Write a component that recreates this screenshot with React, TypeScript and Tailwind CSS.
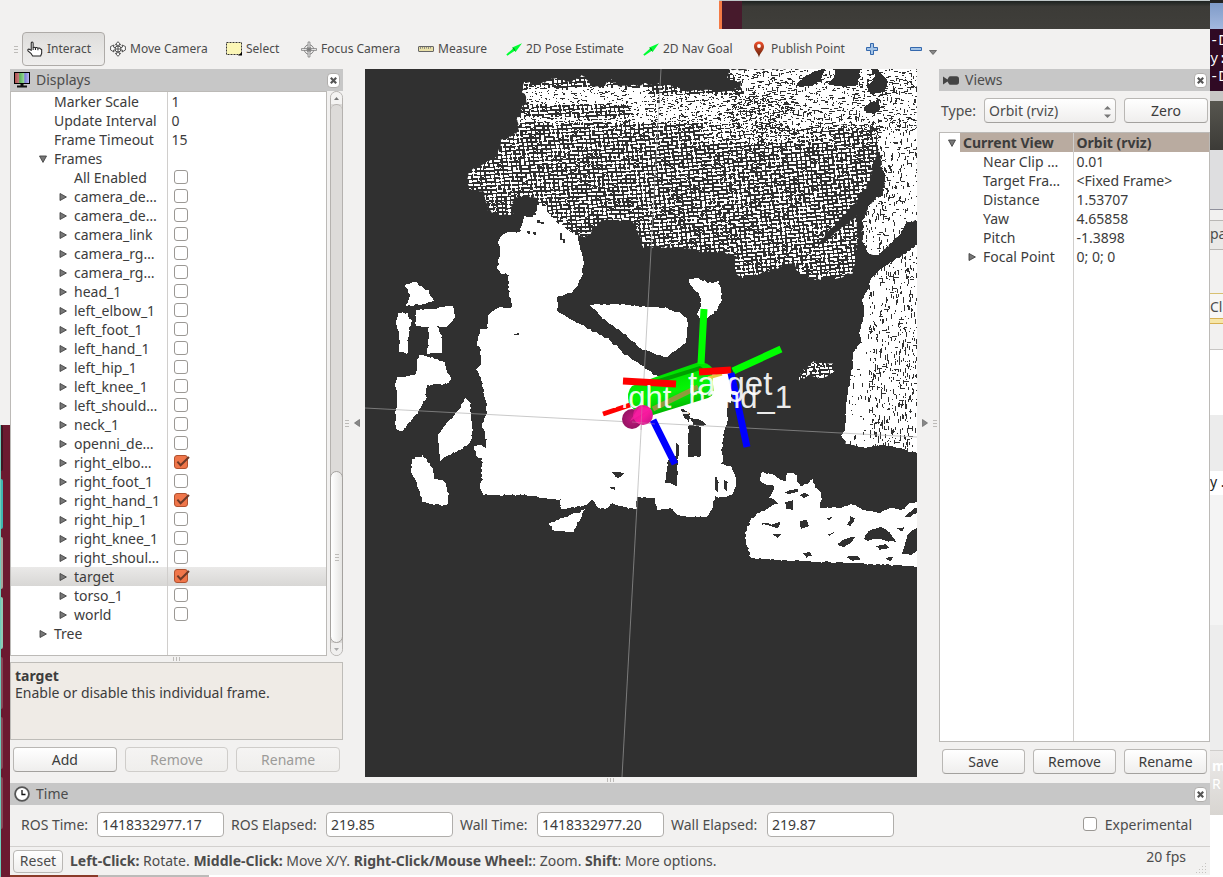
import React, { useState } from "react";

/* ---------- geometry helpers for the 3D view ---------- */

type Pt = [number, number];

function rng(seed: number) {
  let s = seed;
  return () => {
    s = (s * 1664525 + 1013904223) % 4294967296;
    return s / 4294967296;
  };
}

function parse(text: string): Pt[] {
  return text
    .trim()
    .split(/\s+/)
    .map((p) => p.split(",").map(Number) as Pt);
}

/* Outline with the irregular border of a depth-camera cloud. */
function ragged(text: string, seed: number, amount = 0.9) {
  const r = rng(seed);
  const pts = parse(text);
  let d = "";
  pts.forEach((a, i) => {
    const b = pts[(i + 1) % pts.length];
    const n = Math.max(1, Math.round(Math.hypot(b[0] - a[0], b[1] - a[1]) / 2.5));
    for (let k = 0; k < n; k++) {
      const x = a[0] + ((b[0] - a[0]) * k) / n + (r() - 0.5) * 2 * amount;
      const y = a[1] + ((b[1] - a[1]) * k) / n + (r() - 0.5) * 2 * amount;
      d += `${d === "" ? "M" : "L"}${x.toFixed(1)} ${y.toFixed(1)}`;
    }
  });
  return d + "Z";
}

function rect(x: number, y: number, w: number, h: number) {
  return `M${Math.round(x)} ${Math.round(y)}h${w}v${h}h${-w}z`;
}

function mesh(x0: number, y0: number, x1: number, y1: number, seed: number) {
  const r = rng(seed);
  let d = "";
  for (let v = y0; v < y1 + 30; v += 3.8) {
    for (let u = x0; u < x1; u += 4.5) {
      const y = v - Math.max(0, u - 640) * 0.09 + Math.max(0, 640 - u) * 0.05;
      const x = u + (v - 160) * 0.1;
      const t = r();
      if (t < 0.12) d += rect(x, y, 2, 1) + rect(x + 2, y + 1, 1, 1);
      else if (t < 0.27) d += rect(x, y, 2, 2);
      else if (t < 0.5) d += rect(x, y, 4, 2);
      else if (t < 0.68) d += rect(x, y, 3, 3);
      else d += rect(x, y, 3, 2);
      if (r() < 0.24) d += rect(x + 3, y + 1, 2, 1);
      if (r() < 0.26) d += rect(x + 1, y + 2, 1, 2);
    }
  }
  return d;
}

function specks(x0: number, y0: number, x1: number, y1: number, count: number, seed: number, vertical: number, long = 4) {
  const r = rng(seed);
  let d = "";
  for (let i = 0; i < count; i++) {
    const x = x0 + r() * (x1 - x0);
    const y = y0 + r() * (y1 - y0);
    const len = 1 + Math.floor(r() * long);
    d += r() < vertical ? rect(x, y, 1, len) : rect(x, y, len, 1);
  }
  return d;
}

const curtain = ragged(
  "525,80 533,84 545,82 553,78 570,82 584,75 590,84 600,87 612,80 620,87 645,84 660,84 690,91 730,91 742,88 742,82 728,79 730,69 917,69 917,220 907,222 900,234 877,256 867,252 863,239 863,219 870,205 877,197 883,197 886,176 882,166 879,152 877,150 873,166 870,182 860,197 847,212 827,232 817,246 823,244 840,229 857,217 858,236 855,256 852,272 843,277 810,280 800,272 793,262 767,272 743,277 735,274 736,256 720,252 697,251 673,247 643,247 638,232 632,222 605,219 595,226 588,237 578,236 558,229 538,204 537,197 518,196 513,202 512,215 502,216 488,209 485,196 482,192 468,189 467,172 480,166 497,156 502,141 518,132 517,119 523,107 528,102 523,92",
  7,
  1.6
);
const wallTop = ragged(
  "786,69 917,69 917,220 907,222 900,234 877,256 867,252 863,239 863,219 870,205 877,197 883,197 886,176 882,166 879,152 877,136 868,126 830,124 806,120 786,100",
  11
);
const wallLow = ragged(
  "920,243 900,257 880,269 870,281 867,292 862,299 863,303 864,320 860,330 861,343 853,352 852,370 847,397 845,430 842,435 845,444 867,448 873,445 897,447 910,452 920,452",
  13
);

const solids = [
  "525,216 520,232 508,232 503,234 498,241 500,252 497,269 500,273 509,275 508,282 510,299 512,307 498,308 488,315 488,328 480,330 477,342 480,350 480,365 477,369 482,383 485,397 487,413 482,423 486,440 485,448 478,444 473,447 477,457 482,458 482,480 479,485 483,495 525,495 548,499 560,500 561,509 568,509 588,504 593,499 598,508 608,508 612,503 627,508 636,508 637,497 655,498 657,510 673,509 678,516 690,517 707,517 713,507 715,497 723,497 733,495 737,480 732,468 722,463 722,450 725,427 728,420 727,403 730,372 700,367 657,377 640,364 623,353 610,340 595,332 558,312 557,297 573,292 582,276 584,262 581,251 578,236 567,229 557,222 548,212 547,206 538,205 536,212 532,218",
  "590,305 622,304 643,307 667,308 680,313 688,320 686,343 667,357 643,350 623,333 603,318",
  "689,279 698,278 710,283 718,281 721,287 721,302 715,312 708,318 702,320 697,315 701,305 700,295 690,285",
  "405,285 415,282 428,290 433,300 420,305 406,305 410,295",
  "416,310 453,306 455,317 447,327 416,326",
  "398,313 407,313 411,320 408,338 408,354 399,352 400,337 396,323",
  "428,326 437,326 442,335 442,353 427,354 429,340",
  "420,354 445,362 448,373 452,380 447,384 427,385 426,397 417,413 402,432 396,430 395,417 397,403 396,377 416,375 417,360",
  "465,398 470,403 472,427 471,443 440,461 438,435 447,423 457,412",
  "412,460 423,455 433,470 434,479 443,480 449,493 447,506 424,503 418,487 411,470",
  "549,523 565,517 584,510 577,525 574,532 554,531",
  "745,533 752,518 760,513 778,503 770,497 775,487 760,482 761,472 773,475 785,482 788,473 797,475 797,482 803,487 813,478 815,487 822,492 820,507 840,508 853,504 863,510 880,513 890,508 903,509 910,503 920,502 920,567 893,565 855,563 797,561 750,558 747,543",
];

const holes = [
  "797,84 805,76 822,69 825,69 820,82 810,86 800,87",
  "828,84 834,76 835,69 860,69 858,85 845,87",
  "868,88 875,77 871,69 878,69 888,82 885,92 870,94",
  "864,108 870,102 878,101 880,109 874,114 866,113",
  "689,425 701,427 701,456 688,457",
  "677,442 675,457 668,460 665,483 672,483 677,487 678,457 680,447",
  "681,408 690,413 689,422 684,418",
  "690,418 700,420 708,424 703,427 694,425",
  "715,477 718,478 718,493 715,490",
  "724,480 727,482 727,491 724,489",
  "612,472 625,473 618,478",
  "610,487 616,487 615,489 611,489",
  "785,492 798,488 798,492 787,494",
  "800,495 805,492 809,495 804,498",
  "785,502 793,500 792,510 786,508",
  "800,521 807,520 809,526 801,529",
  "762,522 772,524 780,522 778,528 771,526 762,524",
  "773,534 782,534 777,538",
  "826,518 832,517 829,521",
  "850,516 855,518 851,526 848,525",
  "838,544 848,538 855,537 851,543 842,547",
  "828,534 834,532 830,537",
  "803,553 810,552 812,556 806,557",
  "864,539 868,531 880,527 890,532 896,542 888,541 878,538 868,541",
  "876,546 885,544 889,548 880,550",
  "903,517 912,510 920,506 920,512 908,517",
  "909,533 920,525 920,550 910,555 902,553",
  "847,557 857,556 861,560 850,560",
  "886,558 893,557 891,561",
  "897,529 905,527 903,531",
];

const cloudPaths = {
  mesh: mesh(445, 50, 915, 290, 3),
  fill:
    specks(520, 87, 645, 104, 1100, 21, 0.05, 5) +
    specks(515, 117, 650, 122, 230, 23, 0.05, 5) +
    specks(630, 94, 800, 122, 1700, 22, 0.08, 5) +
    specks(700, 120, 830, 142, 450, 24, 0.1, 5) +
    specks(780, 110, 880, 128, 900, 25, 0.1, 5),
  upper: specks(728, 69, 917, 130, 1050, 31, 0.3, 4),
  arc: specks(808, 124, 878, 140, 260, 33, 0.2, 5),
  wall: specks(862, 120, 917, 256, 400, 35, 0.7, 4),
  low: specks(868, 250, 917, 445, 500, 37, 0.85, 5) + specks(845, 350, 917, 450, 120, 39, 0.85, 4),
  blob: mesh(780, 355, 840, 400, 41) + specks(797, 362, 833, 381, 60, 43, 0.4, 3),
};

function PointCloudView() {
  return (
    <svg
      viewBox="365 69 552 708"
      preserveAspectRatio="xMidYMin slice"
      className="block h-full w-full bg-[#303030]"
      role="img"
      aria-label="3D view"
    >
      <defs>
        <clipPath id="curtain"><path d={curtain} /></clipPath>
        <clipPath id="wallTop"><path d={wallTop} /></clipPath>
        <clipPath id="wallLow"><path d={wallLow} /></clipPath>
        <clipPath id="blob">
          <path d={ragged("797,378 803,371 813,362 822,363 832,364 834,373 822,379 810,375 798,381", 5)} />
        </clipPath>
        <linearGradient id="cyl" x1="0" y1="0" x2="0.35" y2="1">
          <stop offset="0" stopColor="#00b400" />
          <stop offset="0.3" stopColor="#00e000" />
          <stop offset="0.65" stopColor="#05f505" />
          <stop offset="1" stopColor="#00b000" />
        </linearGradient>
        <radialGradient id="ballBack"><stop offset="0" stopColor="#c0187e" /><stop offset="1" stopColor="#961464" /></radialGradient>
        <linearGradient id="ballFront" x1="0" y1="0" x2="1" y2="1">
          <stop offset="0" stopColor="#d0158a" /><stop offset="0.55" stopColor="#f81a9e" /><stop offset="1" stopColor="#c01482" />
        </linearGradient>
      </defs>

      <g shapeRendering="crispEdges">
        <g clipPath="url(#curtain)" fill="#fff">
          <path d={cloudPaths.mesh} />
          <path d={cloudPaths.fill} />
          <path d="M730 69h60v26h-45z" />
        </g>
        <path d={wallTop} fill="#fff" />
        <path d={wallLow} fill="#fff" />
        <g clipPath="url(#blob)"><path d={cloudPaths.blob} fill="#fff" /></g>
        {solids.map((s, i) => (
          <path key={i} d={ragged(s, 100 + i)} fill="#fff" />
        ))}
        <g fill="#303030">
          <g clipPath="url(#curtain)"><path d={cloudPaths.upper} /></g>
          <g clipPath="url(#wallTop)"><path d={cloudPaths.arc} /><path d={cloudPaths.wall} /></g>
          <g clipPath="url(#wallLow)"><path d={cloudPaths.low} /></g>
          {holes.map((s, i) => (
            <path key={i} d={ragged(s, 200 + i, 0.7)} />
          ))}
          <path d="M537 220h3v2h4v2h-3v-1h-4zM527 231h3v3h-2zM533 232h3v3h-2zM560 233h2v6h3v4h-2v-3h-3zM514 335h5v-2h-2v1h-3z" />
        </g>
      </g>

      <path d="M365 408L917 437M661 69L622 777" stroke="#a8a8a8" strokeOpacity="0.62" fill="none" />

      <path d="M632 386L653 378L699 362Q708 362 713 369L716 386Q715 395 708 398L653 415Q640 418 629 404Q626 392 632 386Z" fill="url(#cyl)" />
      <path d="M655 380L700 366L704 369L662 382Z" fill="#00a000" />
      <path d="M712 372H731V403Q720 400 714 396Z" fill="#fff" />
      <path d="M708 378L722 374" stroke="#e6c840" strokeWidth="3" />
      <path d="M653 409L698 387" stroke="#8f9a3c" strokeWidth="5" />
      <g strokeWidth="7" fill="none">
        <path d="M704 309L701 364M781 349L733 371" stroke="#0f0" />
        <path d="M623 381L676 384M699 372L731 370" stroke="#f00" />
        <path d="M603 414L630 405" stroke="#f00" strokeWidth="5" />
        <path d="M731 373L747 447M653 420L675 464" stroke="#00f" />
      </g>
      <g fill="#fff" fillOpacity="0.92" fontFamily="'Liberation Sans', Arial, sans-serif">
        <text x="611" y="408" fontSize="31">right_hand_1</text>
        <text x="688" y="395" fontSize="33">target</text>
      </g>
      <circle cx="632" cy="419" r="10" fill="url(#ballBack)" />
      <circle cx="643" cy="415" r="10" fill="url(#ballFront)" />
      <path d="M630 421L640 406L651 409Z" fill="#fb20a4" fillOpacity="0.7" />
      <path d="M632 422L655 424M642 405L641 430" stroke="#d080a8" strokeOpacity="0.5" />
    </svg>
  );
}

/* ---------- icons ---------- */

const HandIcon = () => (
  <svg width="17" height="16" viewBox="0 0 17 16" fill="#fff" stroke="#222" strokeWidth="1.1" strokeLinejoin="round">
    <path d="M4.5 9.5V2Q4.5 .6 5.5 .6T6.5 2V6.5Q7.8 5.6 9 6.7Q10.5 5.8 11.6 7.2Q13.4 6.4 14.4 8L15.6 8.6V12.5L14.5 15.4H6L4.5 13L1 10Q.5 8 2 8Z" />
    <path d="M6.5 6.5V9M9 6.7V9M11.6 7.2V9.4" fill="none" />
  </svg>
);
const MoveIcon = () => (
  <svg width="16" height="16" viewBox="0 0 16 16" fill="#fff" stroke="#444" strokeWidth=".9">
    <path d="M8 .7L10.6 3.6H9V5H7V3.6H5.4ZM8 15.3L10.6 12.4H9V11H7V12.4H5.4ZM.6 5.5L4 4L3.4 6L5.5 7V9L3.4 9.2L4 11L.6 9ZM15.4 5.5L12 4L12.6 6L10.5 7V9L12.6 9.2L12 11L15.4 9Z" />
    <circle cx="8" cy="8" r="3" /><path d="M5 8H11M8 5V11" />
  </svg>
);
const SelectIcon = () => (
  <svg width="16" height="14" viewBox="0 0 16 14">
    <rect x=".5" y=".5" width="15" height="12" fill="#fbf6b6" stroke="#333" strokeDasharray="2 1" />
    <path d="M16 10V13.5H12Z" fill="#000" />
  </svg>
);
const FocusIcon = () => (
  <svg width="17" height="17" viewBox="0 0 17 17" fill="none" stroke="#777">
    <circle cx="8.5" cy="8.5" r="5" /><circle cx="8.5" cy="8.5" r="2.5" />
    <path d="M7.5 .5H9.5V16.5H7.5ZM.5 7.5V9.5H16.5V7.5Z" strokeWidth=".8" fill="#eee" />
    <path d="M8.5 6V11M6 8.5H11" />
  </svg>
);
const RulerIcon = () => (
  <svg width="16" height="6" viewBox="0 0 16 6">
    <rect x=".5" y=".5" width="15" height="5" rx=".5" fill="#e9e0a8" stroke="#666" />
    <path d="M2.5 1V3M4.5 1V2.5M6.5 1V3M8.5 1V2.5M10.5 1V3M12.5 1V2.5" stroke="#777" strokeWidth=".8" />
  </svg>
);
const ArrowIcon = () => (
  <svg width="16" height="13" viewBox="0 0 16 13">
    <path d="M.3 11.4L7 5.4L6.2 4.4L16 .3L9.6 9L8.8 7.8L1.4 12.7Z" fill="#0f3" />
    <path d="M6.2 4.4L9.6 9L8.4 5.6Z" fill="#0a7a1c" />
  </svg>
);
const PinIcon = () => (
  <svg width="16" height="17" viewBox="0 0 16 17">
    <defs><linearGradient id="pin" x1="0" y1="0" x2="0" y2="1"><stop offset="0" stopColor="#f0502c" /><stop offset="1" stopColor="#5a2008" /></linearGradient></defs>
    <path d="M8 16.5C7.4 12 3 9.6 3 5.4C3 2.6 5.2 .6 8 .6S13 2.6 13 5.4C13 9.6 8.6 12 8 16.5Z" fill="url(#pin)" />
    <circle cx="8" cy="5" r="1.9" fill="#fff" />
  </svg>
);
const PlusIcon = () => (
  <svg width="12" height="12" viewBox="0 0 12 12"><path d="M4.5 .5H7.5V4.5H11.5V7.5H7.5V11.5H4.5V7.5H.5V4.5H4.5Z" fill="#a3c3e6" stroke="#3468ad" /></svg>
);
const MinusIcon = () => (
  <svg width="12" height="4" viewBox="0 0 12 4"><path d="M.5 .5H11.5V3.5H.5Z" fill="#a3c3e6" stroke="#3468ad" /></svg>
);
const ScreenIcon = () => (
  <svg width="16" height="16" viewBox="0 0 16 16">
    <defs><linearGradient id="scr" x1="0" x2="1"><stop offset="0" stopColor="#b04848" /><stop offset=".3" stopColor="#c08080" /><stop offset=".34" stopColor="#58b058" /><stop offset=".64" stopColor="#98d898" /><stop offset=".68" stopColor="#7878d8" /><stop offset="1" stopColor="#c0c0f0" /></linearGradient></defs>
    <rect x=".5" y=".5" width="15" height="11" fill="url(#scr)" stroke="#000" />
    <path d="M6.5 12H9.5V13.5H13V15.5H3V13.5H6.5Z" fill="#111" />
  </svg>
);
const CameraIcon = () => (
  <svg width="16" height="9" viewBox="0 0 16 9" fill="#444"><path d="M0 .5L4.5 3.5L5.5 1.5Q6 .3 7.5 .3H13.5Q16 .3 16 3V6Q16 8.7 13.5 8.7H7.5Q6 8.7 5.5 7.2L4.5 5.5L0 8.5Z" /></svg>
);
const ClockIcon = () => (
  <svg width="16" height="16" viewBox="0 0 16 16" fill="none"><circle cx="8" cy="8" r="6.9" fill="#fff" stroke="#555" strokeWidth="1.8" /><path d="M8 4V8.5H11.5" stroke="#111" strokeWidth="1.3" /></svg>
);

function Expander({ open }: { open?: boolean }) {
  return (
    <svg width="8" height="8" viewBox="0 0 8 8" className="shrink-0" fill="#777" stroke="#444" strokeWidth=".9">
      <path d={open ? "M.5 1H7.5L4 7.4Z" : "M1 .5L7.4 4L1 7.5Z"} />
    </svg>
  );
}

/* ---------- shared controls ---------- */

function PanelHeader({ icon, title }: { icon: React.ReactNode; title: string }) {
  return (
    <header className="flex h-[22px] items-center bg-[#c7c7c7] pr-[3px] pl-1 text-[#4c4c4c]">
      <span className="flex w-4 justify-center">{icon}</span>
      <h2 className="ml-1.5 flex-1 text-sm leading-[22px]">{title}</h2>
      <button aria-label={`Close ${title}`} className="flex h-[15px] w-[13px] items-center justify-center rounded-[4px] border border-[#b0aeac] bg-white">
        <svg width="7" height="7" viewBox="0 0 7 7" stroke="#555" strokeWidth="2.2"><path d="M.8 .8L6.2 6.2M6.2 .8L.8 6.2" /></svg>
      </button>
    </header>
  );
}

function PushButton({ children, disabled, className = "" }: { children: React.ReactNode; disabled?: boolean; className?: string }) {
  return (
    <button
      disabled={disabled}
      className={`h-[25px] rounded-[4px] border border-[#b9b7b4] border-b-[#a3a19e] bg-linear-to-b from-white to-[#efeeed] text-sm leading-5 text-[#3c3c3c] disabled:border-[#cfcdca] disabled:from-[#f5f4f3] disabled:to-[#efeeec] disabled:text-[#9c9b99] ${className}`}
    >
      {children}
    </button>
  );
}

function CheckBox({ id, label, checked, onChange }: { id: string; label?: string; checked: boolean; onChange: () => void }) {
  return (
    <span className="relative block size-[15px]">
      <input
        id={id}
        type="checkbox"
        aria-label={label}
        checked={checked}
        onChange={onChange}
        className="block size-[14px] appearance-none rounded-[3px] border border-[#9b9894] bg-white checked:border-[#b0512f] checked:bg-[#f0764a]"
      />
      {checked && (
        <svg width="16" height="14" viewBox="0 0 16 14" className="pointer-events-none absolute top-0 left-0" fill="none" stroke="#6e3a28" strokeWidth="2">
          <path d="M3.4 6.6L6.6 10.2L15 2" />
        </svg>
      )}
    </span>
  );
}

function Grip({ vertical }: { vertical?: boolean }) {
  return (
    <span className={vertical ? "flex flex-col gap-0.5" : "flex gap-0.5"}>
      {[0, 1, 2].map((i) => (
        <i key={i} className={vertical ? "block h-px w-1 bg-[#bdbbb8]" : "block h-1 w-px bg-[#bdbbb8]"} />
      ))}
    </span>
  );
}

/* ---------- toolbar ---------- */

const tools = [
  { label: "Interact", icon: <HandIcon />, width: "w-[83px]", active: true },
  { label: "Move Camera", icon: <MoveIcon />, width: "w-[116px]" },
  { label: "Select", icon: <SelectIcon />, width: "w-[75px]" },
  { label: "Focus Camera", icon: <FocusIcon />, width: "w-[117px]" },
  { label: "Measure", icon: <RulerIcon />, width: "w-[88px]" },
  { label: "2D Pose Estimate", icon: <ArrowIcon />, width: "w-[137px]" },
  { label: "2D Nav Goal", icon: <ArrowIcon />, width: "w-[108px]" },
  { label: "Publish Point", icon: <PinIcon />, width: "w-[116px]" },
];

function Toolbar() {
  return (
    <nav aria-label="Tools" className="flex h-10 items-center pl-1 text-xs text-[#4c4c4c]">
      <span className="mr-1 flex w-1"><Grip vertical /></span>
      {tools.map((t) => (
        <button
          key={t.label}
          className={`flex h-[34px] shrink-0 items-center gap-1 rounded-[4px] border px-1 whitespace-nowrap ${t.width} ${
            t.active ? "border-[#aeaba8] bg-linear-to-b from-[#dedddb] to-[#efeeed]" : "border-transparent"
          }`}
        >
          <span className="flex w-4 shrink-0 justify-center">{t.icon}</span>
          {t.label}
        </button>
      ))}
      <button aria-label="Add tool" className="flex w-[44px] items-center pl-1"><PlusIcon /></button>
      <button aria-label="Remove tool" className="flex items-center gap-[7px] pl-1">
        <MinusIcon />
        <svg width="8" height="5" viewBox="0 0 8 5" className="mt-1.5" fill="#888" stroke="#555" strokeWidth=".8"><path d="M.5 .5H7.5L4 4.5Z" /></svg>
      </button>
    </nav>
  );
}

/* ---------- displays ---------- */

interface Row {
  name: string;
  level: 1 | 2;
  value?: string;
  check?: boolean;
  node?: "open" | "closed";
}

const frames: [string, boolean?][] = [
  ["camera_de…"], ["camera_de…"], ["camera_link"], ["camera_rg…"], ["camera_rg…"], ["head_1"],
  ["left_elbow_1"], ["left_foot_1"], ["left_hand_1"], ["left_hip_1"], ["left_knee_1"], ["left_should…"],
  ["neck_1"], ["openni_de…"], ["right_elbo…", true], ["right_foot_1"], ["right_hand_1", true],
  ["right_hip_1"], ["right_knee_1"], ["right_shoul…"], ["target", true], ["torso_1"], ["world"],
];

const displayRows: Row[] = [
  { name: "Marker Scale", level: 1, value: "1" },
  { name: "Update Interval", level: 1, value: "0" },
  { name: "Frame Timeout", level: 1, value: "15" },
  { name: "Frames", level: 1, node: "open" },
  { name: "All Enabled", level: 2, check: false },
  ...frames.map(([name, on]): Row => ({ name, level: 2, check: !!on, node: "closed" })),
  { name: "Tree", level: 1, node: "closed" },
];

function DisplaysPanel() {
  const [checks, setChecks] = useState(displayRows.map((r) => !!r.check));
  return (
    <section className="flex w-[333px] shrink-0 flex-col">
      <PanelHeader icon={<ScreenIcon />} title="Displays" />
      <div className="flex flex-1 gap-[3px]">
        <div className="flex-1 border border-[#bcbab7] bg-white">
          <table className="h-full w-full table-fixed border-collapse text-sm leading-[19px] text-[#3c3c3c]">
            <colgroup><col className="w-[156px]" /><col /></colgroup>
            <tbody>
              {displayRows.map((r, i) => (
                <tr key={i} className={r.name === "target" ? "h-[19px] bg-linear-to-b from-[#eae9e8] to-[#d8d7d5]" : "h-[19px]"}>
                  <td className="border-r border-[#d0cecc] p-0">
                    <div className={`flex h-[19px] items-center overflow-hidden ${r.level === 1 ? "pl-[21px]" : "pl-[41px]"}`}>
                      <span className="flex w-[19px] shrink-0 justify-end pr-1">{r.node && <Expander open={r.node === "open"} />}</span>
                      <label htmlFor={`display-${i}`} className="pl-[3px] whitespace-nowrap">{r.name}</label>
                    </div>
                  </td>
                  <td className="p-0 pl-1">
                    {r.check !== undefined ? (
                      <div className="pl-0.5">
                        <CheckBox id={`display-${i}`} checked={checks[i]} onChange={() => setChecks(checks.map((c, k) => (k === i ? !c : c)))} />
                      </div>
                    ) : (
                      <output id={`display-${i}`}>{r.value}</output>
                    )}
                  </td>
                </tr>
              ))}
              <tr><td className="border-r border-[#d0cecc] p-0" /><td className="p-0" /></tr>
            </tbody>
          </table>
        </div>
        <div className="flex w-[13px] flex-col rounded-full border border-[#b5b2af] bg-[#dddbd9]">
          <span className="flex h-3 items-center justify-center rounded-t-full bg-[#f4f3f2]">
            <svg width="5" height="3" viewBox="0 0 5 3" fill="#777"><path d="M0 3H5L2.5 0Z" /></svg>
          </span>
          <span className="flex-1 rounded-t-full border-t border-[#b5b2af]" />
          <span className="-mx-px flex h-[172px] items-center justify-center rounded-full border border-[#a5a29f] bg-linear-to-r from-white to-[#e6e5e3]">
            <Grip vertical />
          </span>
          <span className="flex h-3 items-center justify-center rounded-b-full bg-[#f0efee]">
            <svg width="5" height="3" viewBox="0 0 5 3" fill="#aaa"><path d="M0 0H5L2.5 3Z" /></svg>
          </span>
        </div>
      </div>
      <div className="flex h-1.5 items-center justify-center"><Grip /></div>
      <div className="h-[78px] border border-[#bebcb8] bg-[#efebe6] px-1 pt-1 text-sm leading-[17px] text-[#3c3c3c]">
        <h3 className="font-bold">target</h3>
        <p>Enable or disable this individual frame.</p>
      </div>
      <div className="grid grid-cols-3 gap-2 px-[3px] pt-[7px] pb-[5px]">
        <PushButton>Add</PushButton>
        <PushButton disabled>Remove</PushButton>
        <PushButton disabled>Rename</PushButton>
      </div>
    </section>
  );
}

/* ---------- views ---------- */

const viewRows: [string, string, boolean?][] = [
  ["Near Clip …", "0.01"],
  ["Target Fra…", "<Fixed Frame>"],
  ["Distance", "1.53707"],
  ["Yaw", "4.65858"],
  ["Pitch", "-1.3898"],
  ["Focal Point", "0; 0; 0", true],
];

function ViewsPanel() {
  return (
    <section className="flex w-[271px] shrink-0 flex-col">
      <PanelHeader icon={<CameraIcon />} title="Views" />
      <div className="flex items-center gap-2 px-0.5 py-[7px] text-sm text-[#4c4c4c]">
        <label htmlFor="view-type" className="w-[35px]">Type:</label>
        <div className="relative w-[132px]">
          <select
            id="view-type"
            className="h-[25px] w-full appearance-none rounded-[4px] border border-[#b9b7b4] border-b-[#a3a19e] bg-linear-to-b from-white to-[#efeeed] pr-5 pl-1 text-sm leading-5 text-[#4c4c4c]"
          >
            <option>Orbit (rviz)</option>
          </select>
          <svg width="7" height="12" viewBox="0 0 7 12" className="pointer-events-none absolute top-2 right-[5px]" fill="#777">
            <path d="M0 3.5H7L3.5 0ZM0 8.5H7L3.5 12Z" />
          </svg>
        </div>
        <PushButton className="flex-1">Zero</PushButton>
      </div>
      <div className="mt-0.5 flex-1 border border-[#bcbab7] bg-white">
        <table className="h-full w-full table-fixed border-collapse text-sm leading-[19px] text-[#3c3c3c]">
          <colgroup><col className="w-[133px]" /><col /></colgroup>
          <thead>
            <tr className="h-[19px]">
              <th className="border-r border-[#d0cecc] p-0 text-left">
                <div className="flex h-[19px] items-center pl-px">
                  <span className="flex w-[19px] shrink-0 justify-end pr-1"><Expander open /></span>
                  <span className="flex-1 bg-[#b9aba0] pl-[3px] whitespace-nowrap">Current View</span>
                </div>
              </th>
              <th className="bg-[#b9aba0] p-0 pl-[3px] text-left">Orbit (rviz)</th>
            </tr>
          </thead>
          <tbody>
            {viewRows.map(([name, value, node]) => (
              <tr key={name} className="h-[19px]">
                <td className="border-r border-[#d0cecc] p-0">
                  <div className="flex h-[19px] items-center overflow-hidden pl-[21px]">
                    <span className="flex w-[19px] shrink-0 justify-end pr-1">{node && <Expander />}</span>
                    <span className="pl-[3px] whitespace-nowrap">{name}</span>
                  </div>
                </td>
                <td className="p-0 pl-[3px]">{value}</td>
              </tr>
            ))}
            <tr><td className="border-r border-[#d0cecc] p-0" /><td className="p-0" /></tr>
          </tbody>
        </table>
      </div>
      <div className="grid grid-cols-3 gap-2 px-[3px] pt-[7px] pb-[3px]">
        <PushButton>Save</PushButton>
        <PushButton>Remove</PushButton>
        <PushButton>Rename</PushButton>
      </div>
    </section>
  );
}

/* ---------- time and status ---------- */

const clocks = [
  { label: "ROS Time:", value: "1418332977.17", width: "w-[69px]" },
  { label: "ROS Elapsed:", value: "219.85", width: "w-[88px]" },
  { label: "Wall Time:", value: "1418332977.20", width: "w-[70px]" },
  { label: "Wall Elapsed:", value: "219.87", width: "w-[89px]" },
];

function TimePanel() {
  const [experimental, setExperimental] = useState(false);
  return (
    <section>
      <PanelHeader icon={<ClockIcon />} title="Time" />
      <div className="flex h-[41px] items-center gap-[7px] pr-[18px] pb-0.5 pl-[11px] text-sm text-[#4c4c4c]">
        {clocks.map((c) => (
          <React.Fragment key={c.label}>
            <label htmlFor={c.label} className={`shrink-0 whitespace-nowrap ${c.width}`}>{c.label}</label>
            <input id={c.label} readOnly value={c.value} className="h-[25px] w-[127px] rounded-[4px] border border-[#b0aeab] bg-white px-1 text-sm text-[#3c3c3c]" />
          </React.Fragment>
        ))}
        <span className="flex-1" />
        <CheckBox id="experimental" checked={experimental} onChange={() => setExperimental(!experimental)} />
        <label htmlFor="experimental">Experimental</label>
      </div>
    </section>
  );
}

function StatusBar() {
  return (
    <footer className="flex h-[29px] items-center border-t border-[#d2d0ce] pl-[3px] text-sm text-[#4c4c4c]">
      <button className="h-[23px] w-[50px] rounded-[4px] border border-[#b9b7b4] bg-linear-to-b from-white to-[#efeeed] leading-5">Reset</button>
      <p className="ml-[7px] flex-1 whitespace-nowrap">
        <b>Left-Click:</b> Rotate. <b>Middle-Click:</b> Move X/Y. <b>Right-Click/Mouse Wheel:</b>: Zoom. <b>Shift</b>: More options.
      </p>
      <span className="pb-2">20 fps</span>
      <svg width="12" height="12" viewBox="0 0 12 12" className="mt-auto mr-0.5 ml-2.5" fill="#c6c4c1">
        <path d="M9 0h1v1h-1zM6 3h1v1H6zM9 3h1v1H9zM3 6h1v1H3zM6 6h1v1H6zM9 6h1v1H9zM0 9h1v1H0zM3 9h1v1H3zM6 9h1v1H6zM9 9h1v1H9z" />
      </svg>
    </footer>
  );
}

/* ---------- desktop around the window ---------- */

function Launcher() {
  return (
    <div className="flex w-2.5 shrink-0 flex-col">
      <div className="h-[425px] bg-[#f2f1f0]" />
      <div className="flex flex-1 border-l border-[#6fcdbb] bg-[#6b1a30]">
        <div className="flex w-0.5 flex-col gap-2">
          <i className="h-[46px] rounded-r-sm bg-[#3f1522]" />
          <i className="h-[50px] rounded-r-sm bg-[#3fb5b0]" />
          <i className="h-[52px] rounded-r-sm bg-[#a9a49c]" />
          <i className="h-[52px] rounded-r-sm bg-[#8fc9b4]" />
          <i className="h-[52px] rounded-r-sm bg-[#8a4a5a]" />
          <i className="h-[52px] rounded-r-sm bg-[#8a4a5a]" />
          <i className="h-[52px] rounded-r-sm bg-[#8a4a5a]" />
        </div>
      </div>
    </div>
  );
}

function WindowsBehind() {
  return (
    <div className="flex w-[13px] shrink-0 flex-col overflow-hidden bg-white text-sm leading-[18px] whitespace-nowrap text-[#4c4c4c]">
      <div className="h-[3px] bg-[#222]" />
      <div className="h-[26px] bg-linear-to-b from-[#7f9bc8] to-[#a3b8de]" />
      <div className="h-[62px] bg-[#300a24] pt-[3px] font-['Liberation_Mono',monospace] text-white">
        <div>-D</div><div>y:</div><div>-D</div>
      </div>
      <div className="h-2.5 bg-[#c8c7c5]" />
      <div className="h-[49px] bg-linear-to-b from-[#57564f] to-[#3c3b37]" />
      <div className="h-[60px] border-b border-[#8f909c] bg-[#dedee0]" />
      <div className="h-[10px] bg-[#f2f1f0]" />
      <div className="h-[30px] border-y border-[#b9b7b4] bg-[#eae9e7] pt-1">pa</div>
      <div className="h-[43px] bg-[#f2f1f0]" />
      <div className="h-[25px] border-t border-[#d8c070] bg-[#f7f6f4] pt-1">Cl</div>
      <div className="h-1.5 border-y border-[#d8b050] bg-[#f6e6a8]" />
      <div className="h-[26px] border-b border-[#c8c6c4] bg-[#f2f1f0]" />
      <div className="h-[65px] bg-white" />
      <div className="h-[56px] bg-[#ececec]" />
      <div className="h-[24px] bg-white pt-0.5 text-[#222]">y .</div>
      <div className="h-[130px] bg-[#f4f4f4]" />
      <div className="h-[126px] border-b border-[#d0cecc] bg-[#ededed]" />
      <div className="h-[64px] bg-linear-to-b from-[#eceae9] to-[#d8d5d1] pt-1.5 pl-0.5 text-white">
        <b className="block">m</b>
        <div>R</div>
      </div>
    </div>
  );
}

function SideGutter({ side }: { side: "left" | "right" }) {
  return (
    <div className={`flex w-[22px] shrink-0 items-center gap-[5px] ${side === "left" ? "pl-0.5" : "flex-row-reverse pr-0.5"}`}>
      <Grip vertical />
      <svg width="6" height="8" viewBox="0 0 6 8" fill="#888" stroke="#666" strokeWidth=".7" className={side === "left" ? "" : "rotate-180"}>
        <path d="M5.5 .5V7.5L.5 4Z" />
      </svg>
    </div>
  );
}

export default function App() {
  return (
    <div className="flex min-h-screen font-['Noto_Sans',sans-serif]">
      <Launcher />
      <main className="flex min-w-0 flex-1 flex-col bg-[#f2f1f0]">
        <div className="flex h-[29px] justify-end">
          <div className="flex w-[491px] border-t border-[#bfc7c8]">
            <i className="w-[3px] bg-[#f47a45]" />
            <i className="w-5 bg-[#471a2c]" />
            <i className="flex-1 bg-linear-to-b from-[#1d2220] via-[#3c3b37] via-20% to-[#3f3e3a]" />
          </div>
        </div>
        <Toolbar />
        <div className="flex flex-1">
          <DisplaysPanel />
          <SideGutter side="left" />
          <div className="min-w-0 flex-1"><PointCloudView /></div>
          <SideGutter side="right" />
          <ViewsPanel />
        </div>
        <div className="flex h-1.5 items-center justify-center"><Grip /></div>
        <TimePanel />
        <StatusBar />
        <div className="flex h-0.5">
          <i className="w-[88px] bg-[#8a3a28]" />
          <i className="w-[111px] bg-[#bcbbb9]" />
          <i className="flex-1 bg-white" />
        </div>
      </main>
      <WindowsBehind />
    </div>
  );
}
